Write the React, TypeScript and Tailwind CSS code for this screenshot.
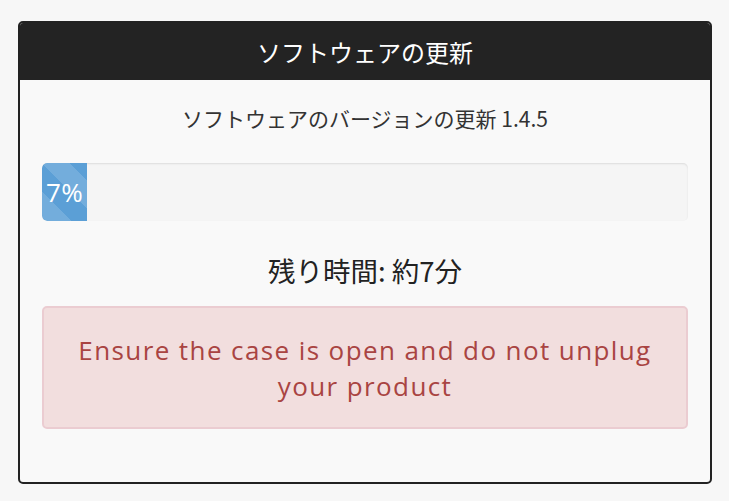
import React from "react";

const jp = "font-['Noto_Sans_CJK_JP','Noto_Sans',sans-serif]";

export default function App() {
  const percent = 7;
  return (
    <div className="min-h-[501px] w-full bg-[#f7f7f7] pt-[21px] pl-[18px] pr-[17px] pb-[17px]">
      <div className="w-[694px] rounded-[5px] border-2 border-[#222] bg-[#f9f9f9] overflow-hidden">
        {/* Header */}
        <div className={`h-[57px] bg-[#232323] flex items-center justify-center text-white text-[24px] ${jp}`}>
          ソフトウェアの更新
        </div>

        {/* Body */}
        <div className="px-[22px] pt-[24px] pb-[53px] flex flex-col items-stretch">
          <p className={`text-center text-[21px] text-[#333] leading-[28px] ${jp}`}>
            ソフトウェアのバージョンの更新 1.4.5
          </p>

          <div className="mt-[31px] h-[58px] rounded-[5px] bg-[#f5f5f5] shadow-[inset_0_1px_2px_rgba(0,0,0,0.1)] overflow-hidden flex">
            <div
              className="h-full rounded-l-[5px] bg-[#5b9fd6] bg-[linear-gradient(45deg,rgba(255,255,255,0.15)_25%,transparent_25%,transparent_50%,rgba(255,255,255,0.15)_50%,rgba(255,255,255,0.15)_75%,transparent_75%,transparent)] bg-[length:56px_56px] flex items-center justify-center text-white text-[26px] tracking-[0.5px] font-['Open_Sans',sans-serif]"
              style={{ width: `${percent}%` }}
            >
              {percent}%
            </div>
          </div>

          <p className={`mt-[32px] text-center text-[27.5px] text-[#222] leading-[34px] ${jp}`}>
            残り時間: 約7分
          </p>

          <div className="mt-[19px] h-[123px] rounded-[5px] border-2 border-[#ebccd1] bg-[#f2dede] flex items-center justify-center px-[30px]">
            <p className="text-center text-[26px] leading-[36px] text-[#a94442] font-['Open_Sans',sans-serif] tracking-[1.4px]">
              Ensure the case is open and do not unplug your product
            </p>
          </div>
        </div>
      </div>
    </div>
  );
}
